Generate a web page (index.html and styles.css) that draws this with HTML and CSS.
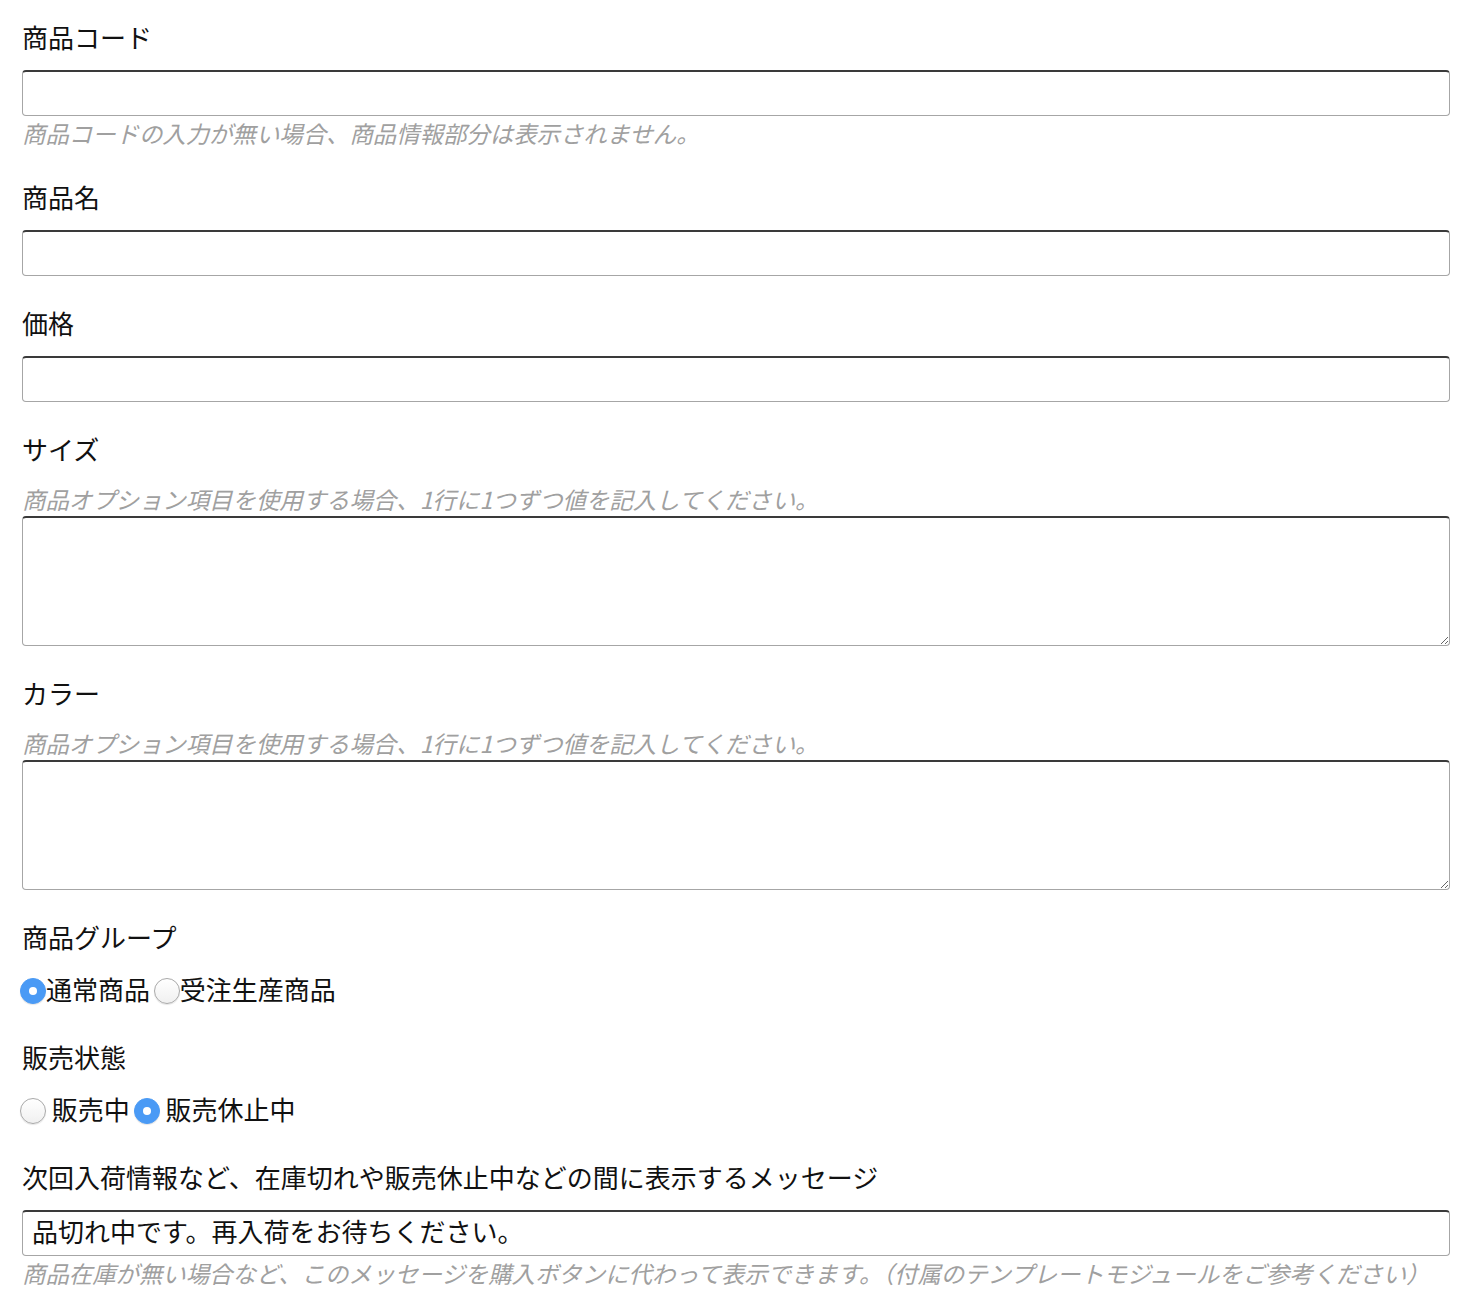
FILE: index.html
```html
<!DOCTYPE html>
<html lang="ja">
<head>
    <meta charset="UTF-8">
    <meta name="viewport" content="width=device-width, initial-scale=1.0">
    <title>商品情報</title>
    <link rel="stylesheet" href="styles.css">
</head>
<body>
    <form class="product-form">
        <div class="form-group">
            <label class="field-label" for="productCode">商品コード</label>
            <input type="text" id="productCode" class="text-input">
            <p class="help">商品コードの入力が無い場合、商品情報部分は表示されません。</p>
        </div>

        <div class="form-group">
            <label class="field-label" for="productName">商品名</label>
            <input type="text" id="productName" class="text-input">
        </div>

        <div class="form-group">
            <label class="field-label" for="price">価格</label>
            <input type="text" id="price" class="text-input">
        </div>

        <div class="form-group">
            <label class="field-label" for="size">サイズ</label>
            <p class="help">商品オプション項目を使用する場合、1行に1つずつ値を記入してください。</p>
            <textarea id="size" class="text-area"></textarea>
        </div>

        <div class="form-group">
            <label class="field-label" for="color">カラー</label>
            <p class="help">商品オプション項目を使用する場合、1行に1つずつ値を記入してください。</p>
            <textarea id="color" class="text-area"></textarea>
        </div>

        <div class="form-group">
            <div class="field-label">商品グループ</div>
            <div class="radio-row">
                <input type="radio" name="group" id="groupNormal" class="radio" checked><label for="groupNormal">通常商品</label>
                <input type="radio" name="group" id="groupOrder" class="radio"><label for="groupOrder">受注生産商品</label>
            </div>
        </div>

        <div class="form-group">
            <div class="field-label">販売状態</div>
            <div class="radio-row">
                <input type="radio" name="status" id="statusOn" class="radio"> <label for="statusOn">販売中</label>
                <input type="radio" name="status" id="statusOff" class="radio" checked> <label for="statusOff">販売休止中</label>
            </div>
        </div>

        <div class="form-group">
            <label class="field-label" for="message">次回入荷情報など、在庫切れや販売休止中などの間に表示するメッセージ</label>
            <input type="text" id="message" class="text-input" value="品切れ中です。再入荷をお待ちください。">
            <p class="help">商品在庫が無い場合など、このメッセージを購入ボタンに代わって表示できます。（付属のテンプレートモジュールをご参考ください）</p>
        </div>
    </form>
</body>
</html>
```

FILE: styles.css
```css
body {
    margin: 0;
    padding: 20px 22px 0;
    background-color: #fff;
    color: #111;
    font-family: "Noto Sans CJK JP", "Noto Sans", sans-serif;
}
.product-form {
    margin: 0;
}
.form-group {
    margin-bottom: 30px;
}
.field-label {
    display: block;
    font-size: 26px;
    line-height: 34px;
    height: 36px;
    margin-bottom: 14px;
}
.text-input,
.text-area {
    display: block;
    width: 100%;
    box-sizing: border-box;
    margin: 0;
    border: 1px solid #a6a6a6;
    border-top: 2px solid #3a3a3a;
    border-radius: 4px;
    background: #fff;
    font-family: "Noto Sans CJK JP", sans-serif;
    color: #111;
}
.text-input {
    height: 46px;
    padding: 0 9px 7px;
    font-size: 26px;
}
.text-area {
    height: 130px;
    resize: vertical;
    padding: 6px 9px;
    font-size: 26px;
}
.help {
    margin: 0;
    font-size: 23.4px;
    line-height: 34px;
    font-style: italic;
    color: #a0a0a0;
    white-space: nowrap;
}
.radio-row {
    height: 40px;
    line-height: 38px;
    font-size: 26px;
}
.radio {
    appearance: none;
    -webkit-appearance: none;
    display: inline-block;
    vertical-align: middle;
    width: 26px;
    height: 26px;
    margin: -4px 0 0 -2px;
    border-radius: 50%;
    border: 1px solid #a9a9a9;
    background: linear-gradient(#fff, #f0f0f0);
    box-shadow: 0 1px 1px rgba(0,0,0,0.1);
    box-sizing: border-box;
    position: relative;
}
.radio:checked {
    border-color: #4a9af5;
    background: #4a9af5;
}
.radio:checked::after {
    content: "";
    position: absolute;
    left: 8px;
    top: 8px;
    width: 8px;
    height: 8px;
    border-radius: 50%;
    background: #fff;
}
```
